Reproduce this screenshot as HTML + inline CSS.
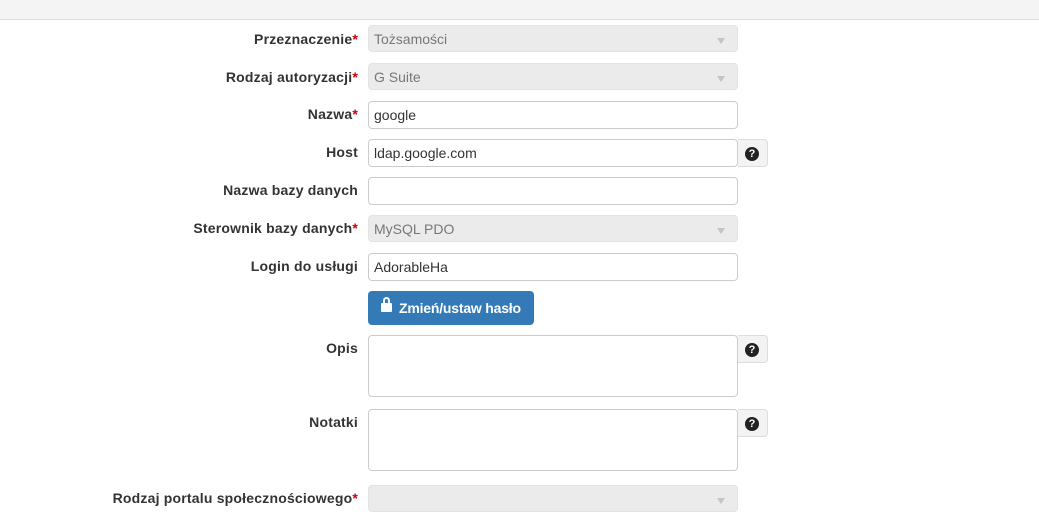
<!DOCTYPE html>
<html><head><meta charset="utf-8"><style>
body{margin:0;width:1039px;height:519px;background:#fff;font-family:"Liberation Sans",Arial,sans-serif;font-size:14px;color:#333;position:relative;overflow:hidden}
.top{position:absolute;left:0;top:0;width:1039px;height:19px;background:#f4f4f4;border-bottom:1px solid #ddd}
.l{position:absolute;right:681px;font-weight:bold;white-space:nowrap;line-height:20px;letter-spacing:0.2px}
.l b{color:#c00}
.f{position:absolute;left:368px;border:1px solid #ccc;border-radius:4px;background:#fff;box-sizing:border-box;width:370px;padding-left:5px;line-height:26px}
.s{background:#ebebeb;border-color:#e3e3e3;color:#777}
.s:after{content:"";position:absolute;right:12px;top:12px;border:4px solid transparent;border-top:6px solid #c4c4c4;border-bottom:0}
.a{position:absolute;left:738px;width:30px;height:28px;box-sizing:border-box;border:1px solid #ddd;border-left:0;border-radius:0 4px 4px 0;background:#f3f3f3}
.a i{position:absolute;left:7px;top:7px;width:14px;height:14px;border-radius:50%;background:#222;color:#fff;font-style:normal;font-weight:bold;font-size:11px;line-height:14px;text-align:center}
.btn{position:absolute;left:368px;top:291px;width:166px;height:34px;background:#337ab7;border-radius:4px;color:#fff;font-weight:bold;font-size:14px;line-height:34px;box-sizing:border-box;padding-left:31px;letter-spacing:-0.2px}
.lock{position:absolute;left:13px;top:12px;width:11px;height:9px;background:#fff;border-radius:1px}
.lock:before{content:"";position:absolute;left:2px;top:-6px;width:3px;height:5px;border:2px solid #fff;border-bottom:0;border-radius:4px 4px 0 0}
</style></head><body>
<div class="top"></div>
<div class="l" style="top:29px">Przeznaczenie<b>*</b></div>
<div class="f s" style="top:25px;height:27px">Tożsamości</div>
<div class="l" style="top:67px">Rodzaj autoryzacji<b>*</b></div>
<div class="f s" style="top:63px;height:27px">G Suite</div>
<div class="l" style="top:104px">Nazwa<b>*</b></div>
<div class="f" style="top:101px;height:28px">google</div>
<div class="l" style="top:142px">Host</div>
<div class="f" style="top:139px;height:28px">ldap.google.com</div>
<div class="a" style="top:139px"><i>?</i></div>
<div class="l" style="top:180px">Nazwa bazy danych</div>
<div class="f" style="top:177px;height:28px"></div>
<div class="l" style="top:218px">Sterownik bazy danych<b>*</b></div>
<div class="f s" style="top:215px;height:27px">MySQL PDO</div>
<div class="l" style="top:256px">Login do usługi</div>
<div class="f" style="top:253px;height:28px">AdorableHa</div>
<div class="btn"><span class="lock"></span>Zmień/ustaw hasło</div>
<div class="l" style="top:338px">Opis</div>
<div class="f" style="top:335px;height:62px"></div>
<div class="a" style="top:335px"><i>?</i></div>
<div class="l" style="top:412px">Notatki</div>
<div class="f" style="top:409px;height:62px"></div>
<div class="a" style="top:409px"><i>?</i></div>
<div class="l" style="top:488px">Rodzaj portalu społecznościowego<b>*</b></div>
<div class="f s" style="top:485px;height:27px"></div>
</body></html>
